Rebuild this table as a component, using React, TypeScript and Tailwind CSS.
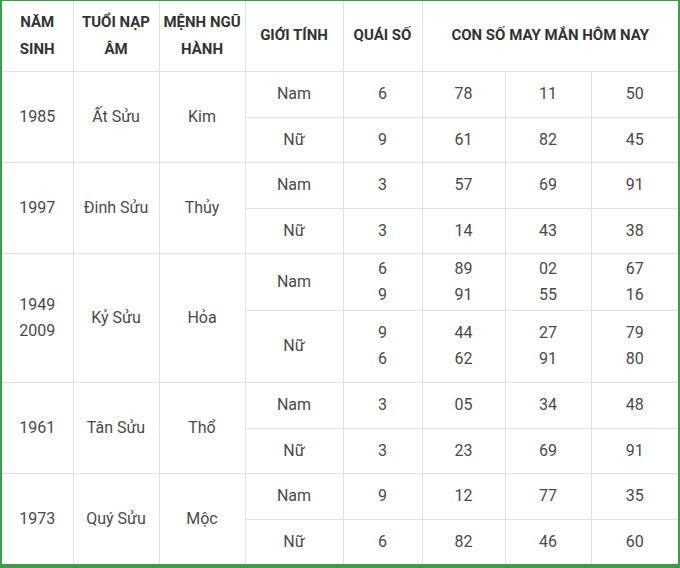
import React from "react";

type Sub = { gender: string; quai: string[]; nums: string[][]; h: string };
type Group = { years: string[]; tuoi: string; menh: string; subs: Sub[] };

const data: Group[] = [
  {
    years: ["1985"],
    tuoi: "Ất Sửu",
    menh: "Kim",
    subs: [
      { gender: "Nam", quai: ["6"], nums: [["78"], ["11"], ["50"]], h: "h-[46px]" },
      { gender: "Nữ", quai: ["9"], nums: [["61"], ["82"], ["45"]], h: "h-[45px]" },
    ],
  },
  {
    years: ["1997"],
    tuoi: "Đinh Sửu",
    menh: "Thủy",
    subs: [
      { gender: "Nam", quai: ["3"], nums: [["57"], ["69"], ["91"]], h: "h-[46px]" },
      { gender: "Nữ", quai: ["3"], nums: [["14"], ["43"], ["38"]], h: "h-[45px]" },
    ],
  },
  {
    years: ["1949", "2009"],
    tuoi: "Kỷ Sửu",
    menh: "Hỏa",
    subs: [
      { gender: "Nam", quai: ["6", "9"], nums: [["89", "91"], ["02", "55"], ["67", "16"]], h: "h-[57px]" },
      { gender: "Nữ", quai: ["9", "6"], nums: [["44", "62"], ["27", "91"], ["79", "80"]], h: "h-[72px]" },
    ],
  },
  {
    years: ["1961"],
    tuoi: "Tân Sửu",
    menh: "Thổ",
    subs: [
      { gender: "Nam", quai: ["3"], nums: [["05"], ["34"], ["48"]], h: "h-[46px]" },
      { gender: "Nữ", quai: ["3"], nums: [["23"], ["69"], ["91"]], h: "h-[45px]" },
    ],
  },
  {
    years: ["1973"],
    tuoi: "Quý Sửu",
    menh: "Mộc",
    subs: [
      { gender: "Nam", quai: ["9"], nums: [["12"], ["77"], ["35"]], h: "h-[46px]" },
      { gender: "Nữ", quai: ["6"], nums: [["82"], ["46"], ["60"]], h: "h-[45px]" },
    ],
  },
];

const td = "border border-[#e2e2e2] text-center align-middle p-0";

function Lines({ items }: { items: string[] }) {
  return (
    <div className="flex flex-col items-center leading-[26px]">
      {items.map((t, i) => (
        <span key={i}>{t}</span>
      ))}
    </div>
  );
}

export default function App() {
  return (
    <div className="w-[680px] h-[568px] bg-white font-['Roboto',sans-serif]">
      <div className="w-[680px] border-2 border-t border-b-[4px] border-[#36a046] bg-white">
        <table className="w-full table-fixed border-collapse border-hidden text-[16px] text-[#4a4a4a]">
          <colgroup>
            <col className="w-[71px]" />
            <col className="w-[86px]" />
            <col className="w-[86px]" />
            <col className="w-[98px]" />
            <col className="w-[79px]" />
            <col className="w-[83px]" />
            <col className="w-[86px]" />
            <col />
          </colgroup>
          <thead>
            <tr className="h-[70px] text-[15px] font-bold text-[#333] leading-[27px]">
              <th className={td}>
                NĂM
                <br />
                SINH
              </th>
              <th className={td}>
                TUỔI NẠP
                <br />
                ÂM
              </th>
              <th className={td}>
                MỆNH NGŨ
                <br />
                HÀNH
              </th>
              <th className={td}>GIỚI TÍNH</th>
              <th className={td}>QUÁI SỐ</th>
              <th className={td} colSpan={3}>
                CON SỐ MAY MẮN HÔM NAY
              </th>
            </tr>
          </thead>
          <tbody>
            {data.map((g) =>
              g.subs.map((s, i) => (
                <tr key={g.tuoi + i} className={s.h}>
                  {i === 0 && (
                    <>
                      <td className={td} rowSpan={2}>
                        <Lines items={g.years} />
                      </td>
                      <td className={td} rowSpan={2}>
                        {g.tuoi}
                      </td>
                      <td className={td} rowSpan={2}>
                        {g.menh}
                      </td>
                    </>
                  )}
                  <td className={td}>{s.gender}</td>
                  <td className={td}>
                    <Lines items={s.quai} />
                  </td>
                  {s.nums.map((n, k) => (
                    <td key={k} className={td}>
                      <Lines items={n} />
                    </td>
                  ))}
                </tr>
              ))
            )}
          </tbody>
        </table>
      </div>
    </div>
  );
}
